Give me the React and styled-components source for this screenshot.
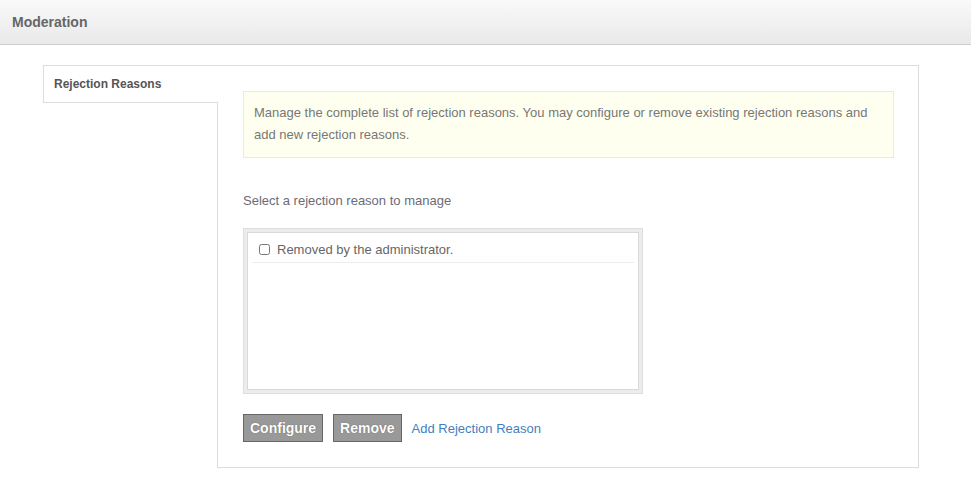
import styled, { createGlobalStyle } from "styled-components";

const GlobalStyle = createGlobalStyle`
  body {
    margin: 0;
    background: #fff;
    font-family: "Liberation Sans", Arial, sans-serif;
  }
`;

const Header = styled.header`
  height: 44px;
  display: flex;
  align-items: center;
  padding-left: 12px;
  background: linear-gradient(#f9f9f9, #e9e9e9);
  border-bottom: 1px solid #cdcdcd;
  font-size: 14px;
  font-weight: bold;
  color: #666;
`;

const Main = styled.main`
  display: flex;
  align-items: flex-start;
  padding: 20px 52px 0 43px;
`;

const Tab = styled.div`
  position: relative;
  z-index: 1;
  width: 164px;
  height: 36px;
  margin-right: -1px;
  display: flex;
  align-items: center;
  padding-left: 10px;
  background: #fff;
  border: 1px solid #ddd;
  border-right: none;
  font-size: 12px;
  font-weight: bold;
  color: #555;
`;

const Panel = styled.section`
  flex: 1;
  padding: 25px 24px 25px 25px;
  border: 1px solid #dcdcdc;
`;

const Notice = styled.div`
  padding: 10px 10px 11px;
  background: #fffff0;
  border: 1px solid #ebebd9;
  font-size: 13px;
  line-height: 22px;
  color: #777;
`;

const Label = styled.p`
  margin: 34px 0 18px;
  font-size: 13px;
  line-height: 18px;
  color: #6b6b75;
`;

const ListFrame = styled.div`
  width: 392px;
  height: 158px;
  padding: 3px;
  background: #ececec;
  border: 1px solid #dedede;
`;

const List = styled.ul`
  height: 148px;
  margin: 0;
  padding: 4px;
  list-style: none;
  background: #fff;
  border: 1px solid #d9d9d9;
`;

const Row = styled.li`
  display: flex;
  align-items: center;
  height: 25px;
  padding-left: 7px;
  border-bottom: 1px solid #ececec;
  font-size: 13px;
  color: #666;

  input {
    width: 11px;
    height: 11px;
    margin: 0 7px 0 0;
  }
`;

const Actions = styled.div`
  display: flex;
  align-items: center;
  gap: 10px;
  margin-top: 20px;
`;

const Button = styled.button`
  height: 28px;
  padding: 0 6px;
  background: #999;
  border: 1px solid #666;
  font-family: inherit;
  font-size: 14px;
  font-weight: bold;
  color: #fff;
  text-shadow: 0 0 1px #555;
  cursor: pointer;
`;

const Link = styled.a`
  font-size: 13px;
  color: #3f7fbf;
  text-decoration: none;
  cursor: pointer;
`;

export default function App() {
  return (
    <>
      <GlobalStyle />
      <Header>Moderation</Header>
      <Main>
        <Tab>Rejection Reasons</Tab>
        <Panel>
          <Notice>
            Manage the complete list of rejection reasons. You may configure or
            remove existing rejection reasons and add new rejection reasons.
          </Notice>
          <Label>Select a rejection reason to manage</Label>
          <ListFrame>
            <List>
              <Row>
                <input type="checkbox" />
                Removed by the administrator.
              </Row>
            </List>
          </ListFrame>
          <Actions>
            <Button>Configure</Button>
            <Button>Remove</Button>
            <Link>Add Rejection Reason</Link>
          </Actions>
        </Panel>
      </Main>
    </>
  );
}
